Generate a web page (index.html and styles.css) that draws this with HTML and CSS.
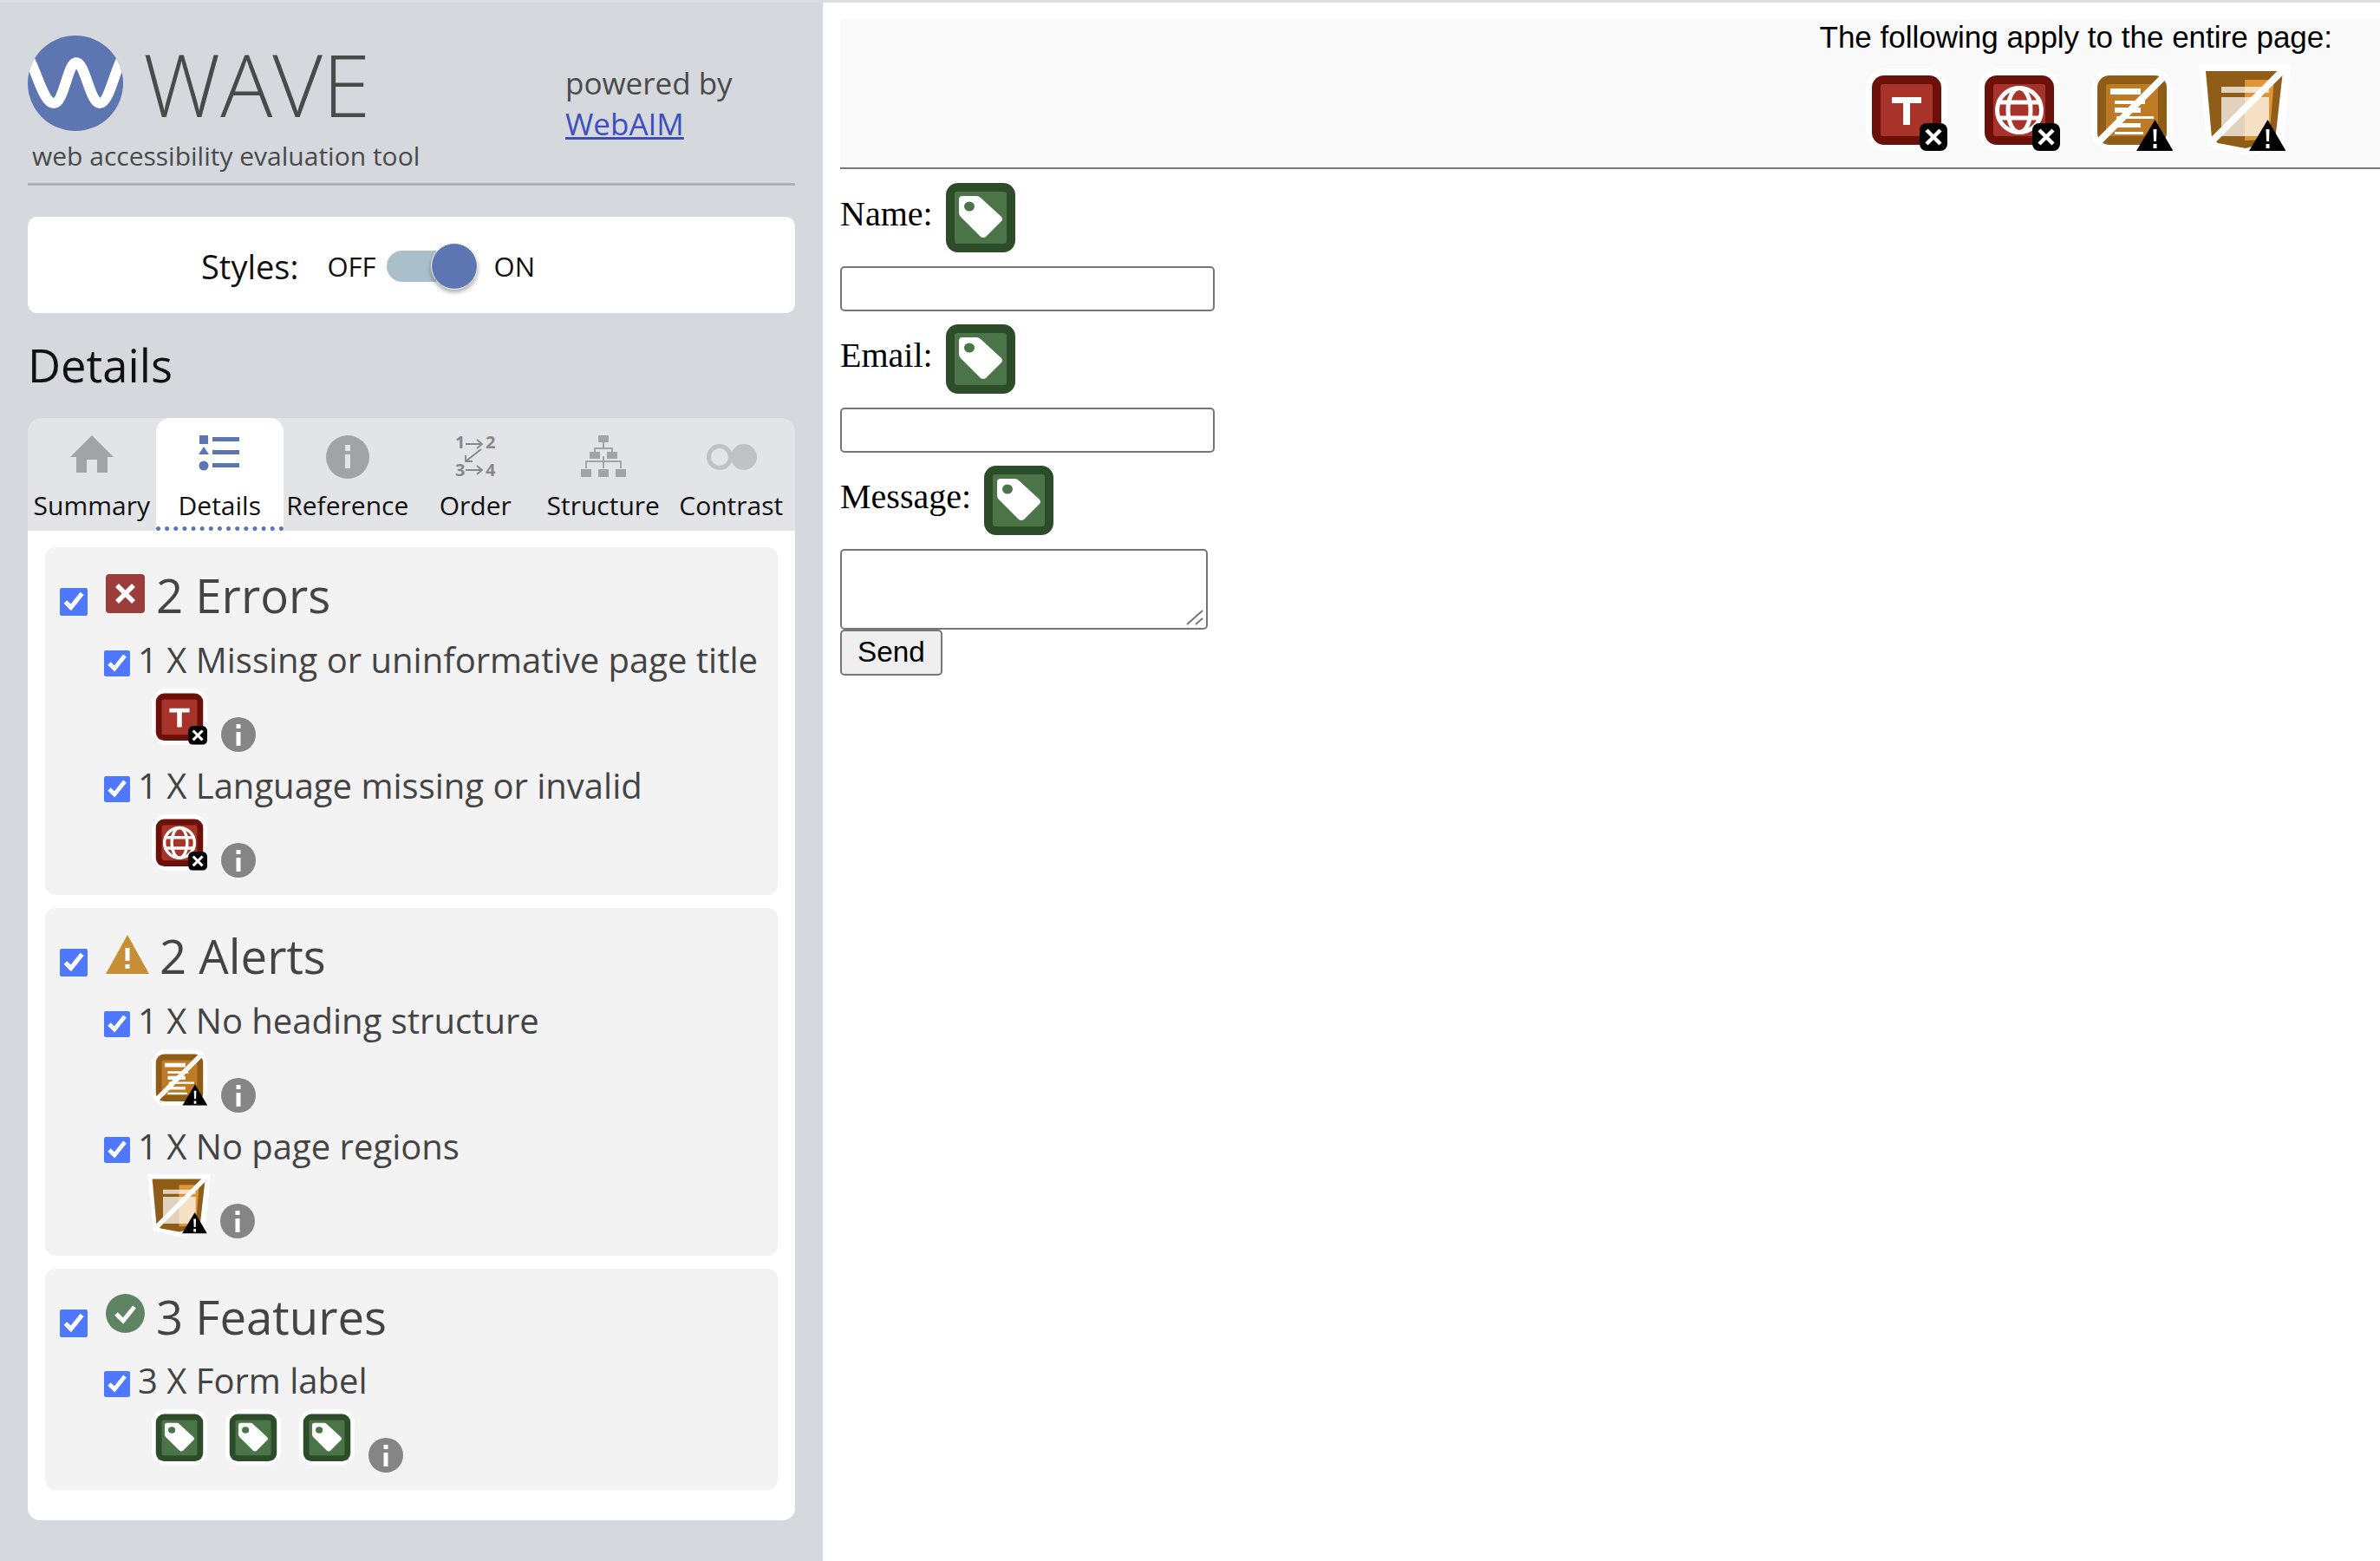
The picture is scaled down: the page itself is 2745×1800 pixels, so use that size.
FILE: index.html
```html
<!DOCTYPE html>
<html lang="en">
<head>
<meta charset="utf-8">
<title>WAVE</title>
<link rel="stylesheet" href="styles.css">
</head>
<body>
<svg class="defs" width="0" height="0" aria-hidden="true">
  <defs>
    <symbol id="badge-x" viewBox="0 0 94 95">
      <rect x="62" y="63" width="32" height="32" rx="8" fill="#000"/>
      <path d="M70 71 86 87M86 71 70 87" stroke="#fff" stroke-width="4.5" fill="none"/>
    </symbol>
    <symbol id="i-title" viewBox="0 0 94 95">
      <rect width="94" height="95" rx="24" fill="#fff"/>
      <rect x="7" y="8" width="80" height="80" rx="14" fill="#6b1109"/>
      <rect x="17" y="18" width="60" height="60" rx="3" fill="#a8332a"/>
      <path d="M30 33H64V40H51V65H43V40H30Z" fill="#fff"/>
      <use href="#badge-x"/>
    </symbol>
    <symbol id="i-lang" viewBox="0 0 94 95">
      <rect width="94" height="95" rx="24" fill="#fff"/>
      <rect x="7" y="8" width="80" height="80" rx="14" fill="#6b1109"/>
      <rect x="17" y="18" width="60" height="60" rx="3" fill="#a8332a"/>
      <g fill="none" stroke="#fff" stroke-width="5">
        <circle cx="47" cy="48" r="25.5"/>
        <ellipse cx="47" cy="48" rx="13" ry="25.5"/>
        <path d="M21 39H73M21 57H73"/>
      </g>
      <use href="#badge-x"/>
    </symbol>
    <symbol id="i-tri" viewBox="0 0 94 95">
      <path d="M73.500 59 94.500 95H52Z" fill="#000"/>
      <path d="M71.500 70H75.500L75 84H72ZM71.500 87H75.500V92H71.500Z" fill="#fff"/>
    </symbol>
    <symbol id="i-heading" viewBox="0 0 94 95">
      <rect width="94" height="95" rx="24" fill="#fff"/>
      <rect x="7" y="8" width="80" height="80" rx="14" fill="#8f5d18"/>
      <rect x="17" y="18" width="60" height="60" rx="3" fill="#bf7a26"/>
      <path d="M22 23H57V30H22ZM27 37H62V41H27ZM27 45H57V51H27ZM29 55H72V58H29ZM27 63H57V68H27ZM27 73H60V76H27Z" fill="#fff"/>
      <path d="M6 87 87 6" stroke="#fff" stroke-width="8" fill="none"/>
      <use href="#i-tri"/>
    </symbol>
    <symbol id="i-regions" viewBox="0 0 106 105">
      <path d="M0 0H106L97 97 53 105 10 95Z" fill="#fff"/>
      <path d="M8 8H97L88 88 54 97 22 91 15 85Z" fill="#8f5d18"/>
      <path d="M53 18H87L81 87 53 88Z" fill="#e09433"/>
      <path d="M26 26H81V33H26ZM26 38H81V83H26Z" fill="#fff" fill-opacity=".72"/>
      <path d="M14 90 98 6" stroke="#fff" stroke-width="8" fill="none"/>
      <g transform="translate(6 5)"><use href="#i-tri" width="94" height="95"/></g>
    </symbol>
    <symbol id="i-tag" viewBox="0 0 94 95">
      <rect width="94" height="95" rx="24" fill="#fff"/>
      <rect x="7" y="8" width="80" height="80" rx="14" fill="#2d4d2a"/>
      <rect x="17" y="18" width="60" height="60" rx="3" fill="#4b7548"/>
      <path d="M26 23H42Q45 23 47 25L71 47Q73 50 71 52L53 70Q50 72 47 70L24 47Q22 45 22 42V27Q22 23 26 23Z" fill="#fff"/>
      <ellipse cx="34" cy="35" rx="6" ry="5.500" fill="#4b7548"/>
    </symbol>
    <symbol id="i-info" viewBox="0 0 40 40">
      <circle cx="20" cy="20" r="20" fill="#858585"/>
      <path d="M17.500 8H22.500V13H17.500ZM17.500 17H22.500V33H17.500Z" fill="#fff"/>
    </symbol>
  </defs>
</svg>

<aside class="sidebar">
  <header class="brand">
    <div class="brand-main">
      <div class="logo-row">
        <svg class="logo" viewBox="0 0 110 110" aria-hidden="true">
          <defs><clipPath id="logo-clip"><circle cx="55" cy="55" r="55"/></clipPath></defs>
          <circle cx="55" cy="55" r="55" fill="#5d76b2"/>
          <path clip-path="url(#logo-clip)" d="M0 24C10 40 18 78 30 78S46 31 56 31 72 78 83 78 100 40 110 24" fill="none" stroke="#fff" stroke-width="12"/>
        </svg>
        <span class="wave">WAVE</span>
      </div>
      <p class="tagline">web accessibility evaluation tool</p>
    </div>
    <p class="powered">powered by<br><a href="#">WebAIM</a></p>
  </header>

  <section class="styles-card">
    <span class="styles-label">Styles:</span>
    <span class="toggle-text">OFF</span>
    <span class="toggle"><span class="knob"></span></span>
    <span class="toggle-text">ON</span>
  </section>

  <h1 class="details-title">Details</h1>

  <nav class="tabs">
    <a class="tab"><svg class="tab-icon" viewBox="0 0 60 50"><path d="M30 0 55 25H48V43H36V28H24V43H12V25H5Z" fill="#a2a3a7"/></svg>Summary</a>
    <a class="tab active"><svg class="tab-icon" viewBox="0 0 60 50"><path d="M7 0H17V10H7ZM12 13 18 22H6ZM22 2H53V7H22ZM22 17H53V22H22ZM22 32H53V37H22Z" fill="#5d76b2"/><circle cx="12" cy="35" r="5.500" fill="#5d76b2"/></svg>Details</a>
    <a class="tab"><svg class="tab-icon" viewBox="0 0 60 50"><circle cx="30" cy="25" r="25" fill="#a2a3a7"/><path d="M27 11H33V18H27ZM27 22H33V38H27Z" fill="#e2e4e8"/></svg>Reference</a>
    <a class="tab"><svg class="tab-icon" viewBox="0 0 60 50"><g class="order-digits"><text x="7" y="15">1</text><text x="42" y="15">2</text><text x="7" y="47">3</text><text x="42" y="47">4</text></g><path d="M19 10H37M32 5 38 10 32 15M19 40H37M32 35 38 40 32 45M37 16 19 30M19 23V30H27" fill="none" stroke="#87888c" stroke-width="1.800"/></svg>Order</a>
    <a class="tab"><svg class="tab-icon" viewBox="0 0 60 50"><path d="M30 8V15M20 19V15H40V19M30 24V30M10 38V30H50V38M30 30V38" fill="none" stroke="#a2a3a7" stroke-width="2"/><path d="M24 0H36V8H24ZM14 19H26V27H14ZM34 19H46V27H34ZM4 39H16V48H4ZM24 39H36V48H24ZM44 39H56V48H44Z" fill="#a2a3a7"/></svg>Structure</a>
    <a class="tab"><svg class="tab-icon" viewBox="0 0 60 50"><circle cx="17" cy="25" r="12.500" fill="none" stroke="#c0c1c5" stroke-width="5"/><circle cx="45" cy="25" r="15" fill="#c0c1c5"/></svg>Contrast</a>
  </nav>

  <div class="panel">
    <section class="group">
      <div class="group-head">
        <input class="check-lg" type="checkbox" checked>
        <svg class="head-icon" viewBox="0 0 45 45"><rect width="45" height="45" rx="4" fill="#9b3d3a"/><path d="M13 13 32 32M32 13 13 32" stroke="#fff" stroke-width="5.500" fill="none"/></svg>
        <h2 class="group-title">2 Errors</h2>
      </div>
      <div class="item"><input class="check-sm" type="checkbox" checked><span>1 X Missing or uninformative page title</span></div>
      <div class="marks"><svg class="mark"><use href="#i-title"/></svg><svg class="info"><use href="#i-info"/></svg></div>
      <div class="item"><input class="check-sm" type="checkbox" checked><span>1 X Language missing or invalid</span></div>
      <div class="marks"><svg class="mark"><use href="#i-lang"/></svg><svg class="info"><use href="#i-info"/></svg></div>
    </section>

    <section class="group">
      <div class="group-head">
        <input class="check-lg" type="checkbox" checked>
        <svg class="head-icon tri-icon" viewBox="0 0 50 45"><path d="M25 0 50 45H0Z" fill="#c68f35"/><path d="M22.500 15H27.500V30H22.500ZM22.500 34H27.500V39H22.500Z" fill="#fff"/></svg>
        <h2 class="group-title">2 Alerts</h2>
      </div>
      <div class="item"><input class="check-sm" type="checkbox" checked><span>1 X No heading structure</span></div>
      <div class="marks"><svg class="mark"><use href="#i-heading"/></svg><svg class="info"><use href="#i-info"/></svg></div>
      <div class="item"><input class="check-sm" type="checkbox" checked><span>1 X No page regions</span></div>
      <div class="marks"><svg class="mark mark-regions"><use href="#i-regions"/></svg><svg class="info"><use href="#i-info"/></svg></div>
    </section>

    <section class="group">
      <div class="group-head">
        <input class="check-lg" type="checkbox" checked>
        <svg class="head-icon head-up" viewBox="0 0 45 45"><circle cx="22.500" cy="22.500" r="22.500" fill="#5f8463"/><path d="M12 23 20 31 33 15" stroke="#fff" stroke-width="5" fill="none"/></svg>
        <h2 class="group-title">3 Features</h2>
      </div>
      <div class="item item-tight"><input class="check-sm" type="checkbox" checked><span>3 X Form label</span></div>
      <div class="marks"><svg class="mark"><use href="#i-tag"/></svg><svg class="mark"><use href="#i-tag"/></svg><svg class="mark"><use href="#i-tag"/></svg><svg class="info"><use href="#i-info"/></svg></div>
    </section>
  </div>
</aside>

<main class="page">
  <div class="page-bar">
    <p class="page-note">The following apply to the entire page:</p>
    <div class="page-icons">
      <svg class="page-icon"><use href="#i-title"/></svg>
      <svg class="page-icon"><use href="#i-lang"/></svg>
      <svg class="page-icon"><use href="#i-heading"/></svg>
      <svg class="page-icon-regions"><use href="#i-regions"/></svg>
    </div>
  </div>
  <form class="contact">
    <label class="field-label">Name:<svg class="tag"><use href="#i-tag"/></svg></label>
    <input class="field" type="text">
    <label class="field-label">Email:<svg class="tag"><use href="#i-tag"/></svg></label>
    <input class="field" type="text">
    <label class="field-label">Message:<svg class="tag"><use href="#i-tag"/></svg></label>
    <div class="area-wrap">
      <textarea class="field-area"></textarea>
      <svg class="grip" viewBox="0 0 20 18"><path d="M1 17 19 1M11 17 19 10" stroke="#767676" stroke-width="2" fill="none"/></svg>
    </div>
    <button class="send" type="button">Send</button>
  </form>
</main>
</body>
</html>
```
FILE: styles.css
```css
* { box-sizing: border-box; }
html, body { margin: 0; height: 100%; }
body {
  display: flex;
  height: 1800px;
  overflow: hidden;
  background: #fff;
  border-top: 3px solid #dcdddf;
  font-family: "Open Sans", sans-serif;
}
.defs { position: absolute; }

.sidebar {
  flex: 0 0 949px;
  background: #d5d8dd;
  padding: 38px 32px 0;
}
.brand { display: flex; height: 173px; border-bottom: 3px solid #aeb1b6; }
.brand-main { width: 620px; }
.logo-row { display: flex; align-items: center; height: 110px; }
.logo { width: 110px; height: 110px; display: block; flex: none; }
.wave {
  margin-left: 23px;
  font-size: 100px;
  font-weight: 300;
  line-height: 100px;
  color: #4a4a4a;
}
.tagline { margin: 8px 0 0 5px; font-size: 30px; line-height: 42px; color: #4a4a4a; }
.powered { margin: 31px 0 0; font-size: 35px; line-height: 47px; color: #4a4a4a; }
.powered a { color: #3d4fc0; }

.styles-card {
  display: flex;
  align-items: center;
  height: 111px;
  margin-top: 36px;
  padding: 2px 0 0 200px;
  background: #fff;
  border-radius: 11px;
  color: #111;
}
.styles-label { font-size: 38px; margin-right: 33px; }
.toggle-text { font-size: 31px; }
.toggle {
  position: relative;
  width: 105px;
  height: 36px;
  margin: 0 19px 0 12px;
  background: #aabfc9;
  border-radius: 18px;
}
.knob {
  position: absolute;
  right: 0;
  top: -9px;
  width: 54px;
  height: 54px;
  background: #5d76b2;
  border: 1px solid #fff;
  border-radius: 50%;
  box-shadow: 0 3px 5px rgba(0,0,0,.35);
}
.details-title {
  margin: 25px 0 0;
  height: 96px;
  font-size: 52.500px;
  font-weight: 400;
  line-height: 70px;
  color: #111;
}

.tabs {
  display: grid;
  grid-template-columns: repeat(6, 1fr);
  height: 130px;
  background: #e2e4e8;
  border-radius: 16px 16px 0 0;
}
.tab {
  display: flex;
  flex-direction: column;
  align-items: center;
  padding-top: 20px;
  font-size: 30px;
  line-height: 40px;
  color: #111;
  white-space: nowrap;
}
.tab.active { background: #fff; border-radius: 16px 16px 0 0; border-bottom: 5px dotted #5d76b2; }
.tab-icon { width: 60px; height: 50px; margin-bottom: 11px; overflow: visible; }
.order-digits text { font: 700 20px "Open Sans", sans-serif; fill: #87888c; }

.panel {
  height: 1141px;
  padding: 19px 20px 0;
  background: #fff;
  border-radius: 0 0 14px 14px;
}
.group { padding: 28px 0 20px; margin-bottom: 15px; background: #f3f3f3; border-radius: 12px; color: #444; }
.group-head { display: flex; align-items: center; height: 68px; padding-left: 17px; margin-bottom: 12px; }
.check-lg, .check-sm { margin: 0; accent-color: #4f78ff; flex: none; }
.check-lg { width: 32px; height: 32px; margin-top: 1px; }
.check-sm { width: 30px; height: 30px; margin: 1px 9px 0 0; }
.head-icon { width: 45px; height: 45px; margin: -17px 13px 0 21px; flex: none; }
.head-up { margin-top: -21px; }
.tri-icon { width: 50px; margin-right: 12px; }
.group-title { margin: -14px 0 0; font-size: 54.500px; font-weight: 400; line-height: 68px; }
.item { display: flex; align-items: center; height: 50px; padding-left: 68px; font-size: 40px; }
.item span { margin-top: -8px; }
.item-tight { margin-bottom: -1px; }
.item-tight .check-sm { margin-top: -1px; }
.item-tight span { margin-top: -9px; }
.marks { display: flex; gap: 21px; height: 73px; margin: 5px 0 17px 123px; align-items: flex-end; }
.group .marks:last-child { margin-bottom: 0; }
.mark { width: 64px; height: 65px; align-self: flex-start; }
.mark-regions { width: 73px; height: 72px; margin: -1px -5px 0 -5px; }
.info { width: 40px; height: 40px; margin-left: -5px; }

.page { flex: 1; padding: 19px 0 0 20px; }
.page-bar {
  height: 173px;
  background: #f9f9f9;
  border-bottom: 2px solid #777;
  color: #000;
}
.page-note {
  margin: 0;
  padding: 0 55px 0 0;
  text-align: right;
  font: 35px/42px "Liberation Sans", sans-serif;
}
.page-icons { display: flex; gap: 36px; justify-content: flex-end; padding-right: 103px; margin-top: 15px; }
.page-icon { width: 94px; height: 95px; }
.page-icon-regions { width: 106px; height: 105px; margin: -5px 0 0 -6px; }

.contact { display: flex; flex-direction: column; align-items: flex-start; padding-top: 16px; }
.field-label {
  display: flex;
  align-items: flex-start;
  gap: 6px;
  height: 80px;
  font: 40px/71px "Liberation Serif", serif;
  color: #000;
  margin-bottom: 16px;
}
.tag { width: 94px; height: 95px; margin: -8px 0 0 2px; flex: none; }
.field {
  width: 432px;
  height: 52px;
  margin-bottom: 15px;
  background: #fff;
  border: 2px solid #767676;
  border-radius: 5px;
}
.area-wrap { position: relative; width: 424px; height: 93px; }
.field-area {
  display: block;
  width: 424px;
  height: 93px;
  resize: none;
  background: #fff;
  border: 2px solid #767676;
  border-radius: 5px;
}
.grip { position: absolute; right: 5px; bottom: 5px; width: 20px; height: 18px; }
.send {
  width: 118px;
  height: 53px;
  padding: 0 0 2px;
  background: #efefef;
  border: 2px solid #767676;
  border-radius: 5px;
  font: 33.300px "Liberation Sans", sans-serif;
  color: #000;
}
```
